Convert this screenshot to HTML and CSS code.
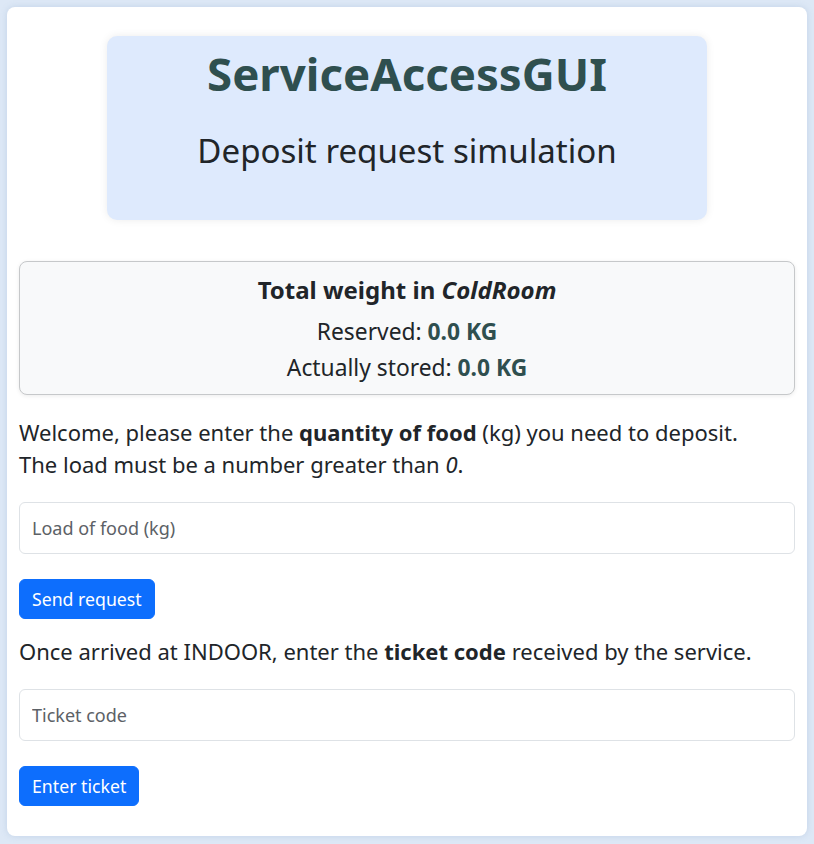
FILE: index.html
```html
<!DOCTYPE html>
<html lang="en">
<head>
<meta charset="utf-8">
<title>ServiceAccessGUI</title>
<link rel="stylesheet" href="styles.css">
</head>
<body>
<main class="card">
  <header class="hero">
    <h1 class="hero-title">ServiceAccessGUI</h1>
    <h2 class="hero-sub">Deposit request simulation</h2>
  </header>

  <section class="weight">
    <h4 class="weight-title">Total weight in <em>ColdRoom</em></h4>
    <div class="weight-row">Reserved: <strong class="val">0.0 KG</strong></div>
    <div class="weight-row">Actually stored: <strong class="val">0.0 KG</strong></div>
  </section>

  <p class="intro">Welcome, please enter the <strong>quantity of food</strong> (kg) you need to deposit.<br>The load must be a number greater than <em>0</em>.</p>
  <input class="field" type="text" placeholder="Load of food (kg)">
  <div class="actions"><button class="btn" type="button">Send request</button></div>

  <p class="intro second">Once arrived at INDOOR, enter the <strong>ticket code</strong> received by the service.</p>
  <input class="field" type="text" placeholder="Ticket code">
  <div class="actions"><button class="btn" type="button">Enter ticket</button></div>
</main>
</body>
</html>
```
FILE: styles.css
```css
* { box-sizing: border-box; }

html, body { height: 100%; }

body {
  margin: 0;
  padding: 7px 7px 8px 7px;
  background: #dde8f6;
  font-family: "Noto Sans", "DejaVu Sans", sans-serif;
  color: #212529;
}

.card {
  display: flex;
  flex-direction: column;
  background: #ffffff;
  border-radius: 8px;
  box-shadow: 0 0 6px rgba(120, 150, 190, 0.25);
  padding: 29px 12px 29px;
  min-height: 829px;
}

.hero {
  width: 600px;
  align-self: center;
  background: #deeafd;
  border-radius: 10px;
  box-shadow: 0 0 8px rgba(0, 0, 0, 0.08);
  padding: 10px 12px 49.7px;
  text-align: center;
}

.hero-title {
  margin: 0;
  font-size: 45.6px;
  line-height: 1.2;
  font-weight: 700;
  color: #2f4f4f;
}

.hero-sub {
  margin: 29.9px 0 0;
  font-size: 33.1px;
  line-height: 1.2;
  font-weight: 400;
  color: #212529;
}

.weight {
  margin-top: 41px;
  background: #f8f9fa;
  border: 1px solid #c6c8ca;
  border-radius: 8px;
  box-shadow: 0 1px 4px rgba(0, 0, 0, 0.08);
  padding: 13.6px 12px 8.3px;
  text-align: center;
  display: flex;
  flex-direction: column;
}

.weight-title {
  margin: 0 0 9.3px;
  font-size: 24px;
  line-height: 1.2;
  font-weight: 700;
}

.weight-row {
  font-size: 22.8px;
  line-height: 36px;
}

.val { color: #2f4f4f; font-weight: 700; }

.intro {
  margin: 22.4px 0 21.7px;
  font-size: 22px;
  line-height: 31.6px;
}

.intro.second { margin-top: 17.4px; margin-bottom: 21.3px; }

.field {
  display: block;
  width: 100%;
  height: 52px;
  padding: 10px 12px;
  font-family: inherit;
  font-size: 18px;
  color: #212529;
  background: #fff;
  border: 1px solid #dee2e6;
  border-radius: 6px;
}

.field::placeholder { color: #5c6166; opacity: 1; }

.actions { margin-top: 24.7px; }

.btn {
  font-family: inherit;
  font-size: 17.7px;
  line-height: 26px;
  padding: 6px 12px;
  color: #fff;
  background: #0d6efd;
  border: 1px solid #0d6efd;
  border-radius: 6px;
}
```
